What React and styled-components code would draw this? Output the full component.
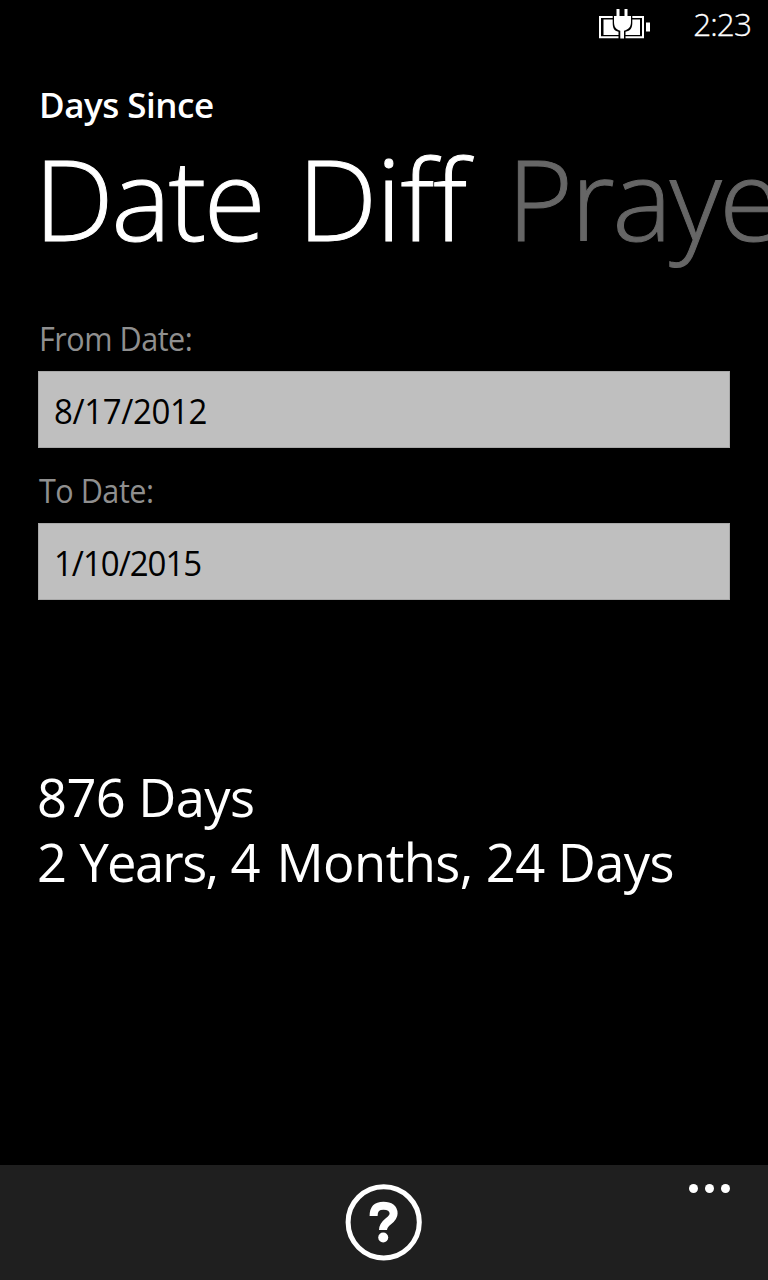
import React from "react";
import styled, { createGlobalStyle } from "styled-components";

const GlobalStyle = createGlobalStyle`
  * { box-sizing: border-box; }
  body { margin: 0; background: #000; }
`;

const Screen = styled.main`
  display: flex;
  flex-direction: column;
  width: 768px;
  height: 1280px;
  overflow: hidden;
  background: #000;
  color: #fff;
  font-family: "Open Sans", "Noto Sans", sans-serif;
  white-space: nowrap;
`;

const StatusBar = styled.header`
  display: flex;
  justify-content: flex-end;
  height: 80px;
  padding-right: 17px;
`;

const BatteryIcon = styled.svg`
  width: 52px;
  height: 31px;
  margin: 9px 42px 0 0;
`;

const Clock = styled.time`
  font-size: 31.5px;
  font-weight: 300;
  line-height: 47px;
  letter-spacing: -0.9px;
  -webkit-text-stroke: 0.3px currentColor;
`;

const AppTitle = styled.h2`
  margin: 0;
  padding-left: 39px;
  font-size: 35px;
  font-weight: 600;
  line-height: 49px;
  letter-spacing: -0.5px;
`;

const PivotHeaders = styled.nav`
  display: flex;
  height: 188px;
  padding-left: 34px;
`;

const PivotHeader = styled.span`
  flex: none;
  width: ${({ $width }) => $width}px;
  font-size: 113px;
  font-weight: 300;
  line-height: 136px;
  word-spacing: 7.6px;
  font-variant-ligatures: none;
  -webkit-text-stroke: 1px currentColor;
  color: ${({ $active }) => ($active ? "#fff" : "#666")};
`;

const Tracked = styled.span`
  letter-spacing: ${({ $tracking }) => $tracking}px;
`;

const Form = styled.form`
  display: flex;
  flex-direction: column;
  gap: 21px;
  padding: 0 38px;
`;

const Field = styled.label`
  display: flex;
  flex-direction: column;
  gap: 10px;
`;

const FieldLabel = styled.span`
  align-self: flex-start;
  padding-left: 1px;
  font-size: 32px;
  line-height: 44px;
  letter-spacing: -0.5px;
  transform: scaleX(0.955);
  transform-origin: left;
  color: #8f8f8f;
`;

const DateBox = styled.span`
  display: flex;
  align-items: center;
  height: 77px;
  padding: 0 15px;
  border: 1px solid #a8a8a8;
  background: #bfbfbf;
  color: #000;
`;

const DateValue = styled.span`
  font-size: 35.5px;
  letter-spacing: ${({ $tracking }) => $tracking}px;
  transform: scaleX(0.93);
  transform-origin: left;
`;

const Results = styled.section`
  flex: 1;
  padding: 164px 37px 0;
`;

const ResultLine = styled.p`
  margin: 0;
  font-size: 52.5px;
  line-height: 65px;
  letter-spacing: -0.6px;
`;

const AppBar = styled.footer`
  position: relative;
  display: flex;
  justify-content: center;
  height: 115px;
  padding-top: 18px;
  background: #1f1f1f;
`;

const HelpButton = styled.button`
  width: 78px;
  height: 78px;
  padding: 0;
  border: 0;
  background: none;
  svg { display: block; }
`;

const MoreButton = styled.button`
  position: absolute;
  top: 19px;
  right: 38px;
  display: flex;
  gap: 7px;
  padding: 0;
  border: 0;
  background: none;
`;

const Dot = styled.i`
  width: 9px;
  height: 9px;
  border-radius: 50%;
  background: #fff;
`;

export default function App() {
  return (
    <Screen>
      <GlobalStyle />
      <StatusBar>
        <BatteryIcon viewBox="0 0 52 31">
          <path d="M1 8H44V28.3H1Z" fill="none" stroke="#fff" strokeWidth="2" />
          <path d="M4.5 10.5H41V26H4.5Z" fill="#fff" />
          <path d="M47 13.5H51V22.5H47Z" fill="#fff" />
          <path d="M13.7 5H33.3V14C33.3 19 31.5 21.8 26.5 22.8V31H19.5V22.8C15 21.8 13.7 19 13.7 14Z" fill="#000" />
          <path d="M17.5 0H20.5V7H25.5V0H28.5V7H32V13C32 18 29.5 20.7 25 21.7V29.5H21.3V21.7C17 20.7 15 18 15 13V7H17.5Z" fill="#fff" />
        </BatteryIcon>
        <Clock>2:23</Clock>
      </StatusBar>
      <AppTitle>Days Since</AppTitle>
      <PivotHeaders>
        <PivotHeader $active $width={473}>
          <Tracked $tracking={-2.6}>Date </Tracked>
          <Tracked $tracking={-1.2}>Diff</Tracked>
        </PivotHeader>
        <PivotHeader $width={300}>
          <Tracked $tracking={-2.4}>Prayer</Tracked>
        </PivotHeader>
      </PivotHeaders>
      <Form>
        <Field>
          <FieldLabel>From Date:</FieldLabel>
          <DateBox>
            <DateValue $tracking={-0.4}>8/17/2012</DateValue>
          </DateBox>
        </Field>
        <Field>
          <FieldLabel>To Date:</FieldLabel>
          <DateBox>
            <DateValue $tracking={-1.1}>1/10/2015</DateValue>
          </DateBox>
        </Field>
      </Form>
      <Results>
        <ResultLine>876 Days</ResultLine>
        <ResultLine>
          2 <Tracked $tracking={-1.7}>Years,</Tracked> <Tracked $tracking={1.2}>4 </Tracked>
          Months, 24 Days
        </ResultLine>
      </Results>
      <AppBar>
        <HelpButton aria-label="help">
          <svg width="78" height="78" viewBox="0 0 78 78">
            <circle cx="38.7" cy="39.3" r="35.6" fill="none" stroke="#fff" strokeWidth="5" />
            <path d="M28.6 33C28.6 26 32 22.7 38.5 22.7C45 22.7 48.6 25.5 48.6 30.5C48.6 38 38 38.5 38 47" fill="none" stroke="#fff" strokeWidth="8" />
            <circle cx="38.2" cy="54.5" r="5" fill="#fff" />
          </svg>
        </HelpButton>
        <MoreButton aria-label="more">
          <Dot />
          <Dot />
          <Dot />
        </MoreButton>
      </AppBar>
    </Screen>
  );
}
